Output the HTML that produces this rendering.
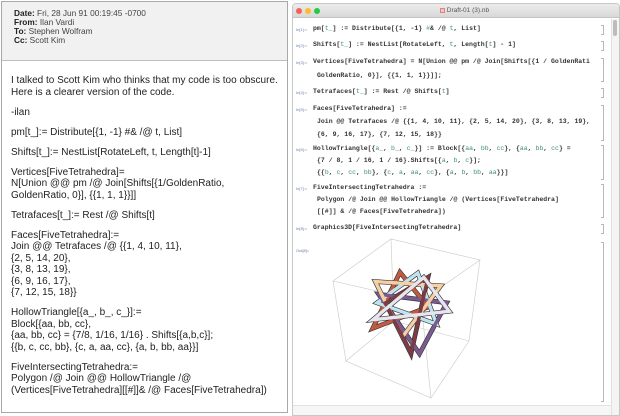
<!DOCTYPE html>
<html><head><meta charset="utf-8">
<style>
*{margin:0;padding:0;box-sizing:border-box}
body{width:620px;height:416px;background:#fff;position:relative;overflow:hidden;font-family:"Liberation Sans",sans-serif}
#mail{position:absolute;left:1px;top:1px;width:287px;height:412px;border:1px solid #a8a8a8;background:#fff}
#hdr{height:59px;background:#f1f1f1;border-bottom:1px solid #bdbdbd;padding:7px 0 0 12px;font-size:8.3px;line-height:9px;color:#444}
#hdr b{color:#222}
#body{position:absolute;left:11px;top:75px;font-size:10px;line-height:11.5px;color:#222;white-space:nowrap}
#body p{margin-bottom:8.5px}
#win{position:absolute;left:292px;top:3px;width:328px;height:413px;background:#fff;border:1px solid #c8c8c8;border-radius:4px 4px 0 0;overflow:hidden}
#tb{height:14px;background:linear-gradient(#ececec,#d8d8d8);border-bottom:1px solid #c4c4c4;position:relative;font-size:6.5px;color:#555}
.dot{position:absolute;top:4px;width:6px;height:6px;border-radius:50%}
#code{position:absolute;left:0;top:0;font-family:"Liberation Mono",monospace;font-weight:bold;font-size:6.5px;color:#333;white-space:nowrap}
.l{position:absolute;white-space:nowrap}
.lab{position:absolute;font-size:4px;color:#6a7fa8;font-family:"Liberation Sans",sans-serif;font-weight:normal}
.g{color:#3f8f7a;font-weight:normal}
.br{position:absolute;left:308px;width:3px;border:1px solid #b8b8b8;border-left:none}
</style></head><body>
<div id="mail">
<div id="hdr">
<div><b>Date:</b> Fri, 28 Jun 91 00:19:45 -0700</div>
<div><b>From:</b> Ilan Vardi</div>
<div><b>To:</b> Stephen Wolfram</div>
<div><b>Cc:</b> Scott Kim</div>
</div>
</div>
<div id="body">
<p>I talked to Scott Kim who thinks that my code is too obscure.<br>Here is a clearer version of the code.</p>
<p>-ilan</p>
<p>pm[t_]:= Distribute[{1, -1} #&amp; /@ t, List]</p>
<p>Shifts[t_]:= NestList[RotateLeft, t, Length[t]-1]</p>
<p>Vertices[FiveTetrahedra]=<br>N[Union @@ pm /@ Join[Shifts[{1/GoldenRatio,<br>GoldenRatio, 0}], {{1, 1, 1}}]]</p>
<p>Tetrafaces[t_]:= Rest /@ Shifts[t]</p>
<p>Faces[FiveTetrahedra]:=<br>Join @@ Tetrafaces /@ {{1, 4, 10, 11},<br>{2, 5, 14, 20},<br>{3, 8, 13, 19},<br>{6, 9, 16, 17},<br>{7, 12, 15, 18}}</p>
<p>HollowTriangle[{a_, b_, c_}]:=<br>Block[{aa, bb, cc},<br>{aa, bb, cc} = {7/8, 1/16, 1/16} . Shifts[{a,b,c}];<br>{{b, c, cc, bb}, {c, a, aa, cc}, {a, b, bb, aa}}]</p>
<p>FiveIntersectingTetrahedra:=<br>Polygon /@ Join @@ HollowTriangle /@<br>(Vertices[FiveTetrahedra][[#]]&amp; /@ Faces[FiveTetrahedra])</p>
</div>

<div id="win">
<div id="tb">
<div class="dot" style="left:3px;background:#fc5f57"></div>
<div class="dot" style="left:12px;background:#fdbc2e"></div>
<div class="dot" style="left:21px;background:#28c840"></div>
<div style="position:absolute;left:147px;top:3px"><span style="display:inline-block;width:5px;height:5px;background:#f4c4c4;border:1px solid #e08080;vertical-align:-1px"></span> Draft-01 (3).nb</div>
</div>
<div style="position:absolute;left:318px;top:15px;width:9px;height:400px;background:#f4f4f4;border-left:1px solid #e0e0e0"></div>
<div style="position:absolute;left:320px;top:16px;width:4px;height:16px;background:#bcbcbc;border-radius:2px"></div>
<div id="code">
<div class="lab" style="left:3px;top:23px">In[1]:=</div><div class="l" style="left:20px;top:21px">pm[<span class="g">t_</span>] := Distribute[{1, -1} <span class="g">#</span>&amp; /@ <span class="g">t</span>, List]</div>
<div class="br" style="top:21px;height:10px"></div>
<div class="lab" style="left:3px;top:39px">In[2]:=</div><div class="l" style="left:20px;top:37px">Shifts[<span class="g">t_</span>] := NestList[RotateLeft, <span class="g">t</span>, Length[<span class="g">t</span>] - 1]</div>
<div class="br" style="top:37px;height:10px"></div>
<div class="lab" style="left:3px;top:56px">In[3]:=</div><div class="l" style="left:20px;top:54px">Vertices[FiveTetrahedra] = N[Union @@ pm /@ Join[Shifts[{1 / GoldenRati</div>
<div class="l" style="left:24px;top:68px">GoldenRatio, 0}], {{1, 1, 1}}]];</div>
<div class="br" style="top:54px;height:24px"></div>
<div class="lab" style="left:3px;top:86px">In[4]:=</div><div class="l" style="left:20px;top:84px">Tetrafaces[<span class="g">t_</span>] := Rest /@ Shifts[<span class="g">t</span>]</div>
<div class="br" style="top:84px;height:10px"></div>
<div class="lab" style="left:3px;top:103px">In[5]:=</div><div class="l" style="left:20px;top:101px">Faces[FiveTetrahedra] :=</div>
<div class="l" style="left:24px;top:114px">Join @@ Tetrafaces /@ {{1, 4, 10, 11}, {2, 5, 14, 20}, {3, 8, 13, 19},</div>
<div class="l" style="left:24px;top:127px">{6, 9, 16, 17}, {7, 12, 15, 18}}</div>
<div class="br" style="top:101px;height:36px"></div>
<div class="lab" style="left:3px;top:143px">In[6]:=</div><div class="l" style="left:20px;top:141px">HollowTriangle[{<span class="g">a_</span>, <span class="g">b_</span>, <span class="g">c_</span>}] := Block[{<span class="g">aa</span>, <span class="g">bb</span>, <span class="g">cc</span>}, {<span class="g">aa</span>, <span class="g">bb</span>, <span class="g">cc</span>} =</div>
<div class="l" style="left:24px;top:153px">{7 / 8, 1 / 16, 1 / 16}.Shifts[{<span class="g">a</span>, <span class="g">b</span>, <span class="g">c</span>}];</div>
<div class="l" style="left:24px;top:165px">{{<span class="g">b</span>, <span class="g">c</span>, <span class="g">cc</span>, <span class="g">bb</span>}, {<span class="g">c</span>, <span class="g">a</span>, <span class="g">aa</span>, <span class="g">cc</span>}, {<span class="g">a</span>, <span class="g">b</span>, <span class="g">bb</span>, <span class="g">aa</span>}}]</div>
<div class="br" style="top:141px;height:35px"></div>
<div class="lab" style="left:3px;top:182px">In[7]:=</div><div class="l" style="left:20px;top:180px">FiveIntersectingTetrahedra :=</div>
<div class="l" style="left:24px;top:192px">Polygon /@ Join @@ HollowTriangle /@ (Vertices[FiveTetrahedra]</div>
<div class="l" style="left:24px;top:204px">[[#]] &amp; /@ Faces[FiveTetrahedra])</div>
<div class="br" style="top:180px;height:34px"></div>
<div class="lab" style="left:3px;top:222px">In[8]:=</div><div class="l" style="left:20px;top:220px">Graphics3D[FiveIntersectingTetrahedra]</div>
<div class="br" style="top:220px;height:10px"></div>
<div class="lab" style="left:3px;top:244px">Out[8]=</div>
<div class="br" style="top:238px;height:160px"></div>
</div>
<div style="position:absolute;left:0;top:401px;width:318px;height:12px;background:#f6f6f6;border-top:1px solid #e2e2e2"></div>
<svg style="position:absolute;left:0;top:0" width="328" height="413" viewBox="292 3 328 413">
<g fill="none" stroke="#c8c8c8" stroke-width="0.6">
<polygon points="332,280 390,238 479,259 468,340 430,397 345,360"/>
<line x1="390" y1="238" x2="393" y2="320"/><line x1="393" y1="320" x2="345" y2="360"/><line x1="393" y1="320" x2="468" y2="340"/>
<line x1="332" y1="280" x2="420" y2="300"/><line x1="420" y1="300" x2="479" y2="259"/><line x1="420" y1="300" x2="430" y2="397"/>
</g>
<g transform="translate(410,312) scale(0.85) translate(-410,-312)">
<g fill="none" stroke-linejoin="miter" stroke-width="5.5" stroke="#333">
<polygon points="397,264 365,330 430,305"/><polygon points="418,265 370,300 440,325"/><polygon points="372,290 420,360 452,300"/>
<polygon points="368,275 445,280 400,340"/><polygon points="380,300 430,270 410,360"/><polygon points="365,320 455,310 425,270"/>
</g>
<g fill="none" stroke-linejoin="miter" stroke-width="4">
<polygon stroke="#c05a40" points="397,264 365,330 430,305"/>
<polygon stroke="#bfe4ee" points="418,265 370,300 440,325"/>
<polygon stroke="#7a5a8f" points="372,290 420,360 452,300"/>
<polygon stroke="#f6d0a4" points="368,275 445,280 400,340"/>
<polygon stroke="#7d3b43" points="380,300 430,270 410,360"/>
<polygon stroke="#e6e6f0" points="365,320 455,310 425,270"/>
</g>
</g>
</svg>
</div>
</body></html>
